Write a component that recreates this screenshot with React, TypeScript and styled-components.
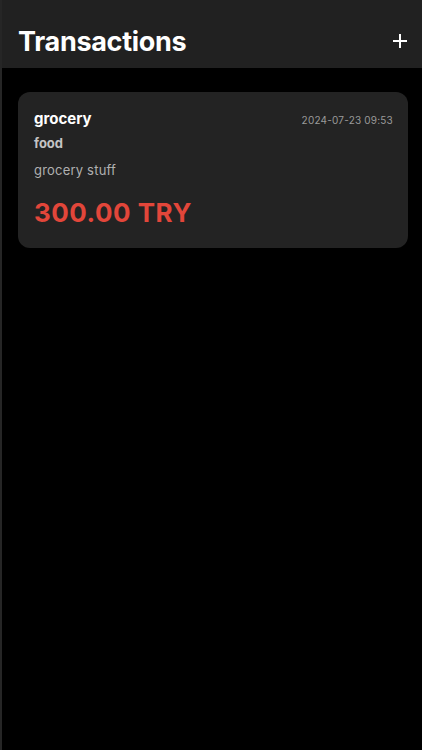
import React from "react";
import styled, { createGlobalStyle } from "styled-components";

const Global = createGlobalStyle`
  html, body { margin: 0; padding: 0; background: #000; }
  body { font-family: Inter, "Noto Sans", sans-serif; -webkit-font-smoothing: antialiased; }
  * { box-sizing: border-box; }
`;

const Screen = styled.div`
  width: 422px;
  height: 750px;
  background: #000;
  border-left: 2px solid #262626;
  display: flex;
  flex-direction: column;
`;

const Header = styled.header`
  height: 68px;
  background: #212121;
  display: flex;
  align-items: flex-end;
  justify-content: space-between;
  padding: 0 15px 9px 16px;
`;

const Title = styled.h1`
  margin: 0;
  color: #fff;
  font-size: 27px;
  font-weight: 700;
  letter-spacing: -0.3px;
  line-height: 34px;
`;

const AddButton = styled.button`
  background: none;
  border: none;
  padding: 0;
  width: 14px;
  height: 14px;
  margin-bottom: 11px;
  display: flex;
  align-items: center;
  justify-content: center;
  color: #fff;
`;

const List = styled.main`
  padding: 24px 14px 0 16px;
  display: flex;
  flex-direction: column;
  gap: 12px;
`;

const Card = styled.div`
  background: #232323;
  border-radius: 12px;
  padding: 16px 15px 20px 16px;
  display: flex;
  flex-direction: column;
`;

const TopRow = styled.div`
  display: flex;
  justify-content: space-between;
  align-items: baseline;
`;

const Name = styled.div`
  color: #fff;
  font-size: 15px;
  font-weight: 700;
  line-height: 22px;
`;

const DateText = styled.div`
  color: #9a9a9a;
  font-size: 10px;
  letter-spacing: 0.2px;
`;

const Category = styled.div`
  color: #c4c4c4;
  font-size: 13px;
  font-weight: 700;
  margin-top: 4px;
  line-height: 18px;
`;

const Note = styled.div`
  color: #b0b0b0;
  font-size: 13px;
  margin-top: 9px;
  line-height: 18px;
  letter-spacing: 0.2px;
`;

const Amount = styled.div`
  color: #e2463a;
  font-size: 26px;
  font-weight: 700;
  margin-top: 19px;
  line-height: 30px;
  letter-spacing: 0.5px;
`;

const transactions = [
  {
    id: 1,
    name: "grocery",
    date: "2024-07-23 09:53",
    category: "food",
    note: "grocery stuff",
    amount: "300.00 TRY",
  },
];

export default function App() {
  return (
    <>
      <Global />
      <Screen>
        <Header>
          <Title>Transactions</Title>
          <AddButton aria-label="Add">
            <svg width="14" height="14" viewBox="0 0 14 14">
              <path d="M7 0.5v13M0.5 7h13" stroke="#fff" strokeWidth="2" strokeLinecap="round" />
            </svg>
          </AddButton>
        </Header>
        <List>
          {transactions.map((t) => (
            <Card key={t.id}>
              <TopRow>
                <Name>{t.name}</Name>
                <DateText>{t.date}</DateText>
              </TopRow>
              <Category>{t.category}</Category>
              <Note>{t.note}</Note>
              <Amount>{t.amount}</Amount>
            </Card>
          ))}
        </List>
      </Screen>
    </>
  );
}
